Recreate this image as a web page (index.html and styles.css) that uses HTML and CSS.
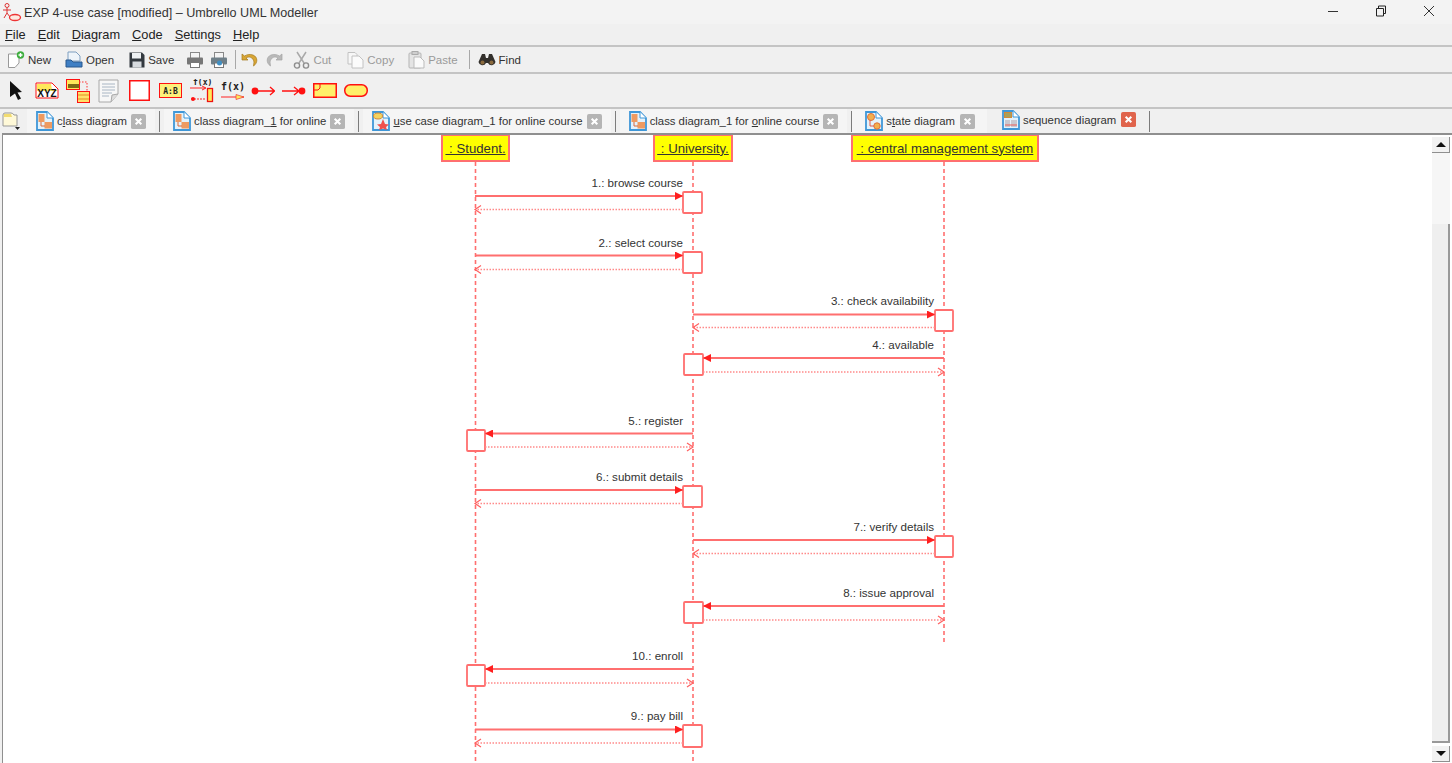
FILE: index.html
```html
<!DOCTYPE html>
<html lang="en">

<head>
    <meta charset="UTF-8">
    <title>EXP 4-use case [modified] – Umbrello UML Modeller</title>
    <link rel="stylesheet" href="styles.css">
</head>

<body>
    <svg class="defs" width="0" height="0">
        <defs>
            <marker id="head" markerWidth="9" markerHeight="8" refX="8" refY="4" orient="auto" markerUnits="userSpaceOnUse">
                <path d="M0 0 L8 4 L0 8 Z" fill="#ff1f1f" />
            </marker>
            <marker id="open" markerWidth="9" markerHeight="10" refX="7" refY="5" orient="auto" markerUnits="userSpaceOnUse">
                <path d="M1 1 L7 5 L1 9" fill="none" stroke="#ff6060" stroke-width="1.2" />
            </marker>
            <symbol id="doc-class" viewBox="0 0 18 20">
                <path d="M1 1 H11 L17 7 V19 H1 Z" fill="#e4f2fb" stroke="#3f97d8" stroke-width="1.8" />
                <path d="M11 1 V7 H17" fill="#fff" stroke="#3f97d8" />
                <rect x="2.500" y="3" width="6" height="8" fill="#ee9a60" />
                <rect x="8.500" y="11" width="7.500" height="6.500" fill="#ee9a60" />
                <path d="M5 11 V15 H9" fill="none" stroke="#d9683a" />
            </symbol>
            <symbol id="doc-usecase" viewBox="0 0 18 20">
                <path d="M1 1 H11 L17 7 V19 H1 Z" fill="#e4f2fb" stroke="#3f97d8" stroke-width="1.8" />
                <path d="M11 1 V7 H17" fill="#fff" stroke="#3f97d8" />
                <ellipse cx="6" cy="5" rx="4.500" ry="3" fill="#f4d35e" stroke="#d08a3a" />
                <path d="M11 8 L13 13 L17 13.500 L14 16 L15 19 L11 17.500 L7 19 L8 16 L5 13.500 L9 13 Z" fill="#f0504e" />
            </symbol>
            <symbol id="doc-state" viewBox="0 0 18 20">
                <path d="M1 1 H11 L17 7 V19 H1 Z" fill="#e4f2fb" stroke="#3f97d8" stroke-width="1.8" />
                <path d="M11 1 V7 H17" fill="#fff" stroke="#3f97d8" />
                <circle cx="6" cy="6" r="3.500" fill="#f2b04e" stroke="#e0703a" />
                <circle cx="12" cy="15" r="3.200" fill="#f2b04e" stroke="#e0703a" />
                <path d="M5 9 V15 H9" fill="none" stroke="#e05a4a" />
            </symbol>
            <symbol id="doc-seq" viewBox="0 0 18 20">
                <path d="M1 1 H11 L17 7 V19 H1 Z" fill="#e4f2fb" stroke="#3f97d8" stroke-width="1.8" />
                <path d="M11 1 V7 H17" fill="#fff" stroke="#3f97d8" />
                <rect x="2.500" y="2.500" width="7" height="5" fill="#a8a05a" stroke="#d08a3a" />
                <rect x="3" y="10" width="5" height="7" fill="#c8c8d0" />
                <rect x="9" y="10" width="6" height="7" fill="#c8c8d0" />
                <path d="M3 15 H15" stroke="#e8605a" />
            </symbol>
            <symbol id="x" viewBox="0 0 16 16">
                <rect width="16" height="16" rx="2" fill="#b5b5b5" />
                <path d="M5 5 L11 11 M11 5 L5 11" stroke="#fff" stroke-width="2.2" />
            </symbol>
        </defs>
    </svg>

    <header class="titlebar">
        <svg class="app-icon" width="20" height="20" viewBox="0 0 20 20">
            <circle cx="5" cy="3.500" r="2" fill="none" stroke="#d33" />
            <path d="M5 6 V11 M1 8 H9 M5 11 L2 16 M5 11 L8 15" stroke="#d33" fill="none" />
            <ellipse cx="13" cy="15.500" rx="5.500" ry="3" fill="#fde9e0" stroke="#e33" stroke-width="1.3" />
        </svg>
        <span class="title">EXP 4-use case [modified] – Umbrello UML Modeller</span>
        <div class="win-controls">
            <svg width="12" height="12" viewBox="0 0 12 12"><path d="M1 6.500 H11" stroke="#333" /></svg>
            <svg width="12" height="12" viewBox="0 0 12 12"><path d="M1.500 3.500 H8.500 V11 H1.500 Z M3.500 3 V1 H10.500 V8.500 H9" fill="none" stroke="#222" /></svg>
            <svg width="12" height="12" viewBox="0 0 12 12"><path d="M1 1 L11 11 M11 1 L1 11" stroke="#333" /></svg>
        </div>
    </header>

    <nav class="menubar">
        <span><u>F</u>ile</span>
        <span><u>E</u>dit</span>
        <span><u>D</u>iagram</span>
        <span><u>C</u>ode</span>
        <span><u>S</u>ettings</span>
        <span><u>H</u>elp</span>
    </nav>

    <div class="toolbar main-tools">
        <button class="tool tool-new">
            <svg width="18" height="18" viewBox="0 0 18 18">
                <path d="M1.500 3 H12 V12 L8 16.500 H1.500 Z" fill="#fff" stroke="#999" />
                <circle cx="13.500" cy="4" r="3.700" fill="#3fae3f" />
                <path d="M11.500 4 H15.500 M13.500 2 V6" stroke="#fff" stroke-width="1.400" />
            </svg>New
        </button>
        <button class="tool tool-open">
            <svg width="18" height="18" viewBox="0 0 18 18">
                <path d="M3 1 H11 L15 5 V10 H3 Z" fill="#eef4fa" stroke="#7f9fc0" />
                <path d="M1 9 H6 L8 11 H17 V16 H1 Z" fill="#3f7fc4" stroke="#28598e" />
            </svg>Open
        </button>
        <button class="tool tool-save">
            <svg width="16" height="16" viewBox="0 0 16 16">
                <path d="M0.500 0.500 H13 L15.500 3 V15.500 H0.500 Z" fill="#33393f" />
                <rect x="3" y="1" width="9" height="5.500" fill="#eef1f3" />
                <rect x="3.500" y="9.500" width="9" height="6" fill="#d6dade" />
            </svg>Save
        </button>
        <button class="tool tool-icon tool-print">
            <svg width="18" height="18" viewBox="0 0 18 18">
                <rect x="4.500" y="1.500" width="9" height="6" fill="#f4f4f4" stroke="#888" />
                <rect x="1" y="6.500" width="16" height="7" rx="1" fill="#777" />
                <rect x="4.500" y="11.500" width="9" height="5" fill="#fff" stroke="#777" />
            </svg>
        </button>
        <button class="tool tool-icon tool-preview">
            <svg width="18" height="18" viewBox="0 0 18 18">
                <rect x="4.500" y="1.500" width="9" height="6" fill="#f4f4f4" stroke="#888" />
                <rect x="1" y="6.500" width="16" height="7" rx="1" fill="#6f7f88" />
                <rect x="4.500" y="12" width="9" height="4.500" fill="#fff" stroke="#777" />
                <circle cx="9.500" cy="12" r="2.500" fill="#3f8fc4" />
            </svg>
        </button>
        <i class="sep"></i>
        <button class="tool tool-icon tool-undo">
            <svg width="18" height="16" viewBox="0 0 18 16">
                <path d="M1 2 V8 H7 L5 6 C8 4 12 5 13 10 L12.500 14 C17 11 17 5 12 3 C9 2 6 2.500 3.500 4 Z" fill="#d8a635" stroke="#a57a1c" stroke-width=".7" />
            </svg>
        </button>
        <button class="tool tool-icon tool-redo">
            <svg width="18" height="16" viewBox="0 0 18 16">
                <path d="M17 2 V8 H11 L13 6 C10 4 6 5 5 10 L5.500 14 C1 11 1 5 6 3 C9 2 12 2.500 14.500 4 Z" fill="#b9b9b9" stroke="#a5a5a5" stroke-width=".7" />
            </svg>
        </button>
        <button class="tool tool-off tool-cut">
            <svg width="17" height="18" viewBox="0 0 17 18">
                <path d="M4 1 L11 12 M13 1 L6 12" stroke="#a9a9a9" stroke-width="1.500" />
                <circle cx="4" cy="14.500" r="2.600" fill="none" stroke="#8d8d8d" stroke-width="1.400" />
                <circle cx="13" cy="14.500" r="2.600" fill="none" stroke="#8d8d8d" stroke-width="1.400" />
            </svg>Cut
        </button>
        <button class="tool tool-off tool-copy">
            <svg width="17" height="18" viewBox="0 0 17 18">
                <path d="M1 1.500 H8 L10 3.500 V13 H1 Z" fill="#f7f7f7" stroke="#c2c2c2" />
                <path d="M5 5 H12 L16 9 V17 H5 Z" fill="#fbfbfb" stroke="#c2c2c2" />
            </svg>Copy
        </button>
        <button class="tool tool-off tool-paste">
            <svg width="17" height="18" viewBox="0 0 17 18">
                <rect x="1" y="2" width="12" height="15" rx="1" fill="#e4e4e4" stroke="#b5b5b5" />
                <rect x="4" y="0.500" width="6" height="3" fill="#cfcfcf" stroke="#aaa" />
                <path d="M6 6 H12 L16 10 V17 H6 Z" fill="#fafafa" stroke="#bbb" />
            </svg>Paste
        </button>
        <i class="sep sep-find"></i>
        <button class="tool tool-find">
            <svg width="18" height="14" viewBox="0 0 18 14">
                <path d="M4 1 H7 L8 5 H10 L11 1 H14 L17.500 9 A4 4 0 0 1 10 10 H8 A4 4 0 0 1 .5 9 Z" fill="#33302c" />
                <circle cx="4.500" cy="9.500" r="2" fill="#8a6a3d" />
                <circle cx="13.500" cy="9.500" r="2" fill="#8a6a3d" />
            </svg>Find
        </button>
    </div>

    <div class="toolbar uml-tools">
        <svg class="u-arrow" width="14" height="19" viewBox="0 0 14 19"><path d="M1 0 L13 11 L8.500 11.500 L12 17.500 L9 19 L6 12.500 L1 16 Z" fill="#111" /></svg>
        <svg class="u-class" width="24" height="17" viewBox="0 0 24 17">
            <path d="M1 1 H17 L23 7 V16 H1 Z" fill="#fff" stroke="#f11" />
            <path d="M2 2 H16 L17 8 H22 V9 H2 Z" fill="#ffe95a" />
            <text x="12" y="15" class="u-xyz">XYZ</text>
        </svg>
        <svg class="u-assoc" width="24" height="24" viewBox="0 0 24 24">
            <rect x="0.500" y="0.500" width="13" height="10" fill="#ffe95a" stroke="#f11" />
            <rect x="2" y="5" width="11" height="4" fill="#7c6a16" />
            <path d="M13 3 H21 V12" fill="none" stroke="#f33" stroke-dasharray="1.500 1.500" />
            <rect x="11.500" y="12.500" width="12" height="11" fill="#ffe06a" stroke="#f11" />
            <path d="M12 16 H23 M12 20 H23" stroke="#e58b20" />
        </svg>
        <svg class="u-note" width="21" height="24" viewBox="0 0 21 24">
            <path d="M1 1 H20 V15 L13 23 H1 Z" fill="#f7f7f7" stroke="#a8a8a8" />
            <path d="M13 23 L14 16 L20 15" fill="#ddd" stroke="#a8a8a8" />
            <path d="M4 5 H17 M4 8 H17 M4 11 H17 M4 14 H14 M4 17 H11" stroke="#a9b6c4" />
        </svg>
        <svg class="u-box" width="21" height="21" viewBox="0 0 21 21"><rect x=".75" y=".75" width="19.500" height="19.500" fill="#fff" stroke="#f11" stroke-width="1.500" /></svg>
        <svg class="u-ab" width="23" height="15" viewBox="0 0 23 15">
            <rect x=".5" y=".5" width="22" height="14" fill="#fdf07a" stroke="#f11" />
            <text x="11.500" y="10.500" class="u-abt">A:B</text>
        </svg>
        <svg class="u-msg" width="24" height="24" viewBox="0 0 24 24">
            <text x="3" y="6" class="u-fx u-fx-sm">f(x)</text>
            <path d="M0 9 H15 M12 7 L16 9 L12 11" fill="none" stroke="#f22" />
            <rect x="17.500" y="9.500" width="5" height="13" fill="#ffe95a" stroke="#e11" stroke-width="1.300" />
            <path d="M1 20 H15" stroke="#f22" stroke-dasharray="2 1" />
            <circle cx="3" cy="20" r="2" fill="#f11" />
        </svg>
        <svg class="u-msg2" width="24" height="24" viewBox="0 0 24 24">
            <text x="0" y="11" class="u-fx">f(x)</text>
            <path d="M0 18 H23" stroke="#f22" />
            <path d="M15 15.500 L23 18 L15 20.500 Z" fill="#ffe95a" stroke="#e33" stroke-width=".7" />
        </svg>
        <svg class="u-found" width="24" height="10" viewBox="0 0 24 10">
            <circle cx="4" cy="5" r="3.400" fill="#f11" />
            <path d="M5 5 H23 M19 1 L23.500 5 L19 9" fill="none" stroke="#f11" stroke-width="1.300" />
        </svg>
        <svg class="u-lost" width="24" height="10" viewBox="0 0 24 10">
            <circle cx="20" cy="5" r="3.400" fill="#f11" />
            <path d="M0 5 H18 M12 1 L17 5 L12 9" fill="none" stroke="#f11" stroke-width="1.300" />
        </svg>
        <svg class="u-yellow" width="24" height="15" viewBox="0 0 24 15">
            <path d="M.75 .75 H23.250 V14.250 H.75 Z" fill="#fff06a" stroke="#f11" stroke-width="1.500" />
            <path d="M1 7 H5 L7 5 V1" fill="none" stroke="#f11" />
        </svg>
        <svg class="u-state" width="24" height="13" viewBox="0 0 24 13"><rect x=".75" y=".75" width="22.500" height="11.500" rx="5.500" fill="#fff06a" stroke="#f11" stroke-width="1.500" /></svg>
    </div>

    <div class="tabbar">
        <svg class="new-tab" width="18" height="18" viewBox="0 0 18 18">
            <path d="M1 3 Q1 1 3 1 H9 Q11 1 12 3 H15 V14 H1 Z" fill="#fff9d8" stroke="#999" />
            <path d="M2 2 H9 L10 5 H2 Z" fill="#f2dc70" />
            <path d="M13 15 L18 15 L15.500 18 Z" fill="#222" />
        </svg>
        <div class="tab tab-1"><svg width="18" height="20"><use href="#doc-class" /></svg><span>c<u>l</u>ass diagram</span><svg width="15" height="15"><use href="#x" /></svg></div>
        <i class="tab-sep"></i>
        <div class="tab tab-2"><svg width="18" height="20"><use href="#doc-class" /></svg><span>class diagram_<u>1</u> for online</span><svg width="15" height="15"><use href="#x" /></svg></div>
        <i class="tab-sep"></i>
        <div class="tab tab-3"><svg width="18" height="20"><use href="#doc-usecase" /></svg><span><u>u</u>se case diagram_1 for online course</span><svg width="15" height="15"><use href="#x" /></svg></div>
        <i class="tab-sep"></i>
        <div class="tab tab-4"><svg width="18" height="20"><use href="#doc-class" /></svg><span>class diagram_1 for <u>o</u>nline course</span><svg width="15" height="15"><use href="#x" /></svg></div>
        <i class="tab-sep"></i>
        <div class="tab tab-5"><svg width="18" height="20"><use href="#doc-state" /></svg><span>s<u>t</u>ate diagram</span><svg width="15" height="15"><use href="#x" /></svg></div>
        <div class="tab tab-active"><svg width="18" height="20"><use href="#doc-seq" /></svg><span>sequence diagram</span>
            <svg width="15" height="15" viewBox="0 0 16 16"><rect width="16" height="16" rx="2" fill="#e0644c" /><path d="M5 5 L11 11 M11 5 L5 11" stroke="#fff" stroke-width="2.200" /></svg>
        </div>
        <i class="tab-sep"></i>
    </div>

    <main class="workspace">
        <section class="canvas">
            <svg class="diagram" width="1430" height="628" viewBox="3 135 1430 628">
                <!-- lifelines -->
                <g class="life">
                    <path d="M475.500 162 V763" />
                    <path d="M693 162 V763" />
                    <path d="M944 162 V644" />
                </g>

                <!-- activations -->
                <g class="act">
                    <rect x="683" y="192" width="19" height="21" rx="1" />
                    <rect x="683" y="252" width="19" height="21" rx="1" />
                    <rect x="935" y="310" width="18" height="21" rx="1" />
                    <rect x="684" y="354" width="19" height="21" rx="1" />
                    <rect x="467" y="430" width="18" height="21" rx="1" />
                    <rect x="683" y="486" width="19" height="21" rx="1" />
                    <rect x="935" y="536" width="18" height="21" rx="1" />
                    <rect x="684" y="602" width="19" height="21" rx="1" />
                    <rect x="467" y="665" width="18" height="21" rx="1" />
                    <rect x="683" y="725" width="19" height="22" rx="1" />
                </g>

                <!-- calls -->
                <g class="call">
                    <path d="M475 196 H683" />
                    <path d="M475 255.500 H683" />
                    <path d="M693 314.500 H935" />
                    <path d="M944 358 H703" />
                    <path d="M693 433.500 H485" />
                    <path d="M475 490 H683" />
                    <path d="M693 540 H935" />
                    <path d="M944 606 H703" />
                    <path d="M693 669 H485" />
                    <path d="M475 729.500 H683" />
                </g>

                <!-- returns -->
                <g class="ret">
                    <path d="M683 209.500 H475" />
                    <path d="M683 269.500 H475" />
                    <path d="M935 327.500 H693" />
                    <path d="M703 372 H944" />
                    <path d="M485 447 H693" />
                    <path d="M683 503.500 H475" />
                    <path d="M935 553.500 H693" />
                    <path d="M703 620 H944" />
                    <path d="M485 683 H693" />
                    <path d="M683 743 H475" />
                </g>

                <g class="msg">
                    <text x="683" y="187">1.: browse course</text>
                    <text x="683" y="247">2.: select course</text>
                    <text x="934" y="305">3.: check availability</text>
                    <text x="934" y="349">4.: available</text>
                    <text x="683" y="425">5.: register</text>
                    <text x="683" y="481">6.: submit details</text>
                    <text x="934" y="531">7.: verify details</text>
                    <text x="934" y="597">8.: issue approval</text>
                    <text x="683" y="660">10.: enroll</text>
                    <text x="683" y="720">9.: pay bill</text>
                </g>
            </svg>

            <div class="obj obj-student"><u>&nbsp;: Student.</u></div>
            <div class="obj obj-university"><u>&nbsp;: University.</u></div>
            <div class="obj obj-central"><u>&nbsp;: central management system</u></div>
        </section>

        <aside class="scrollbar">
            <div class="sb-btn"><i class="tri-up"></i></div>
            <div class="sb-track"></div>
            <div class="sb-thumb"></div>
            <div class="sb-btn"><i class="tri-down"></i></div>
        </aside>
    </main>
</body>

</html>
```

FILE: styles.css
```css
* {
    box-sizing: border-box;
}

html,
body {
    height: 100%;
}

body {
    margin: 0;
    overflow: hidden;
    background-color: #f0f0f0;
    color: #222;
    font-family: "Liberation Sans", "Noto Sans", sans-serif;
    font-size: 12px;
    display: flex;
    flex-direction: column;
}

.defs {
    position: absolute;
}

.titlebar {
    height: 24px;
    display: flex;
    align-items: center;
    padding-left: 2px;
    background-color: #f3f3f3;
    flex: none;
}

.app-icon {
    margin-right: 2px;
}

.title {
    font-size: 12.600px;
    color: #333;
    margin-top: 1px;
}

.win-controls {
    margin-left: auto;
    padding-right: 17px;
    display: flex;
    gap: 36px;
    margin-top: -2px;
}

.menubar {
    height: 21px;
    display: flex;
    align-items: center;
    gap: 12px;
    padding-left: 5px;
    font-size: 12.800px;
    flex: none;
}

.toolbar {
    display: flex;
    align-items: center;
    border-top: 2px solid #c4c4c4;
    flex: none;
}

.main-tools {
    height: 27px;
    padding-left: 7px;
}

.tool {
    display: flex;
    align-items: center;
    gap: 3px;
    padding: 0;
    border: none;
    background: none;
    font: inherit;
    font-size: 11.500px;
    color: #333;
}

.tool-off {
    color: #9a9a9a;
}

.tool-open { margin-left: 14px; }
.tool-save { margin-left: 15px; }
.tool-print { margin-left: 12px; }
.tool-preview { margin-left: 6px; }
.tool-undo { margin-left: 5px; }
.tool-redo { margin-left: 6px; }
.tool-cut { margin-left: 10px; }
.tool-copy { margin-left: 16px; }
.tool-paste { margin-left: 14px; }
.tool-find { margin-left: 8px; }

.sep {
    width: 1px;
    height: 19px;
    margin-left: 7px;
    background-color: #a8a8a8;
}

.sep-find {
    margin-left: 11px;
}

.uml-tools {
    height: 35px;
    padding-left: 9px;
}

.uml-tools svg {
    flex: none;
}

.u-class { margin-left: 12px; }
.u-assoc { margin-left: 7px; }
.u-note { margin-left: 8px; }
.u-box { margin-left: 10px; }
.u-ab { margin-left: 9px; }
.u-msg { margin-left: 8px; }
.u-msg2 { margin-left: 7px; }
.u-found { margin-left: 6px; }
.u-lost { margin-left: 7px; }
.u-yellow { margin-left: 7px; }
.u-state { margin-left: 7px; }

.u-xyz {
    font: bold 10px "Liberation Sans", sans-serif;
    text-anchor: middle;
    fill: #111;
}

.u-abt {
    font: bold 8px "DejaVu Sans Mono", monospace;
    text-anchor: middle;
    fill: #222;
}

.u-fx {
    font: bold 10px "DejaVu Sans Mono", monospace;
    fill: #222;
}

.u-fx-sm {
    font-size: 8px;
}

.tabbar {
    height: 26px;
    display: flex;
    align-items: center;
    padding-left: 2px;
    border-top: 2px solid #c4c4c4;
    font-size: 11.350px;
    flex: none;
}

.new-tab {
    margin-right: 16px;
    flex: none;
}

.tab {
    display: flex;
    align-items: center;
    gap: 3px;
    height: 100%;
    white-space: nowrap;
    color: #333;
}

.tab span {
    flex: none;
}

.tab svg {
    flex: none;
}

.tab svg:last-child {
    margin-left: 1px;
}

.tab-1,
.tab-2,
.tab-3,
.tab-4 {
    background-color: #f5f5f5;
    box-shadow: -9px 0 0 #f5f5f5, 9px 0 0 #f5f5f5;
}

.tab-sep {
    width: 1px;
    height: 21px;
    margin: 0 13px;
    background-color: #7c7c7c;
    flex: none;
}

.tab-5 {
    background-color: #f5f5f5;
    margin-left: -13px;
    padding: 0 12px 0 13px;
}

.tab-5 svg:last-child,
.tab-active svg:last-child {
    margin-left: 2px;
}

.tab-active {
    height: 25px;
    margin-top: -3px;
    padding-left: 15px;
    padding-right: 0;
}

.workspace {
    flex: 1;
    display: flex;
    min-height: 0;
    margin-left: 2px;
    border-top: 2px solid #8f8f8f;
    border-left: 1px solid #8f8f8f;
}

.canvas {
    position: relative;
    width: 1430px;
    background-color: #fff;
    overflow: hidden;
}

.diagram {
    display: block;
}

.life path {
    stroke: #ff6f6f;
    stroke-width: 1.600;
    stroke-dasharray: 4 3;
    fill: none;
}

.act rect {
    fill: #fff;
    stroke: #ff6f6f;
    stroke-width: 1.800;
}

.call path {
    stroke: #ff6f6f;
    stroke-width: 1.800;
    fill: none;
    marker-end: url(#head);
}

.ret path {
    stroke: #ff8a8a;
    stroke-width: 1.400;
    stroke-dasharray: 1.500 1.500;
    fill: none;
    marker-end: url(#open);
}

.msg text {
    font-size: 11.600px;
    text-anchor: end;
    fill: #333;
}

/* object heads sit over the lifelines, at their place on the canvas */
.obj {
    position: absolute;
    top: 0;
    height: 27px;
    display: flex;
    align-items: center;
    justify-content: center;
    background-color: #ffff00;
    border: 2px solid #ff6f6f;
    border-top-width: 1px;
    font-family: "Liberation Sans", sans-serif;
    font-size: 13.200px;
    color: #333;
    white-space: nowrap;
}

.obj-student {
    left: 438px;
    width: 69px;
}

.obj-university {
    left: 650px;
    width: 80px;
}

.obj-central {
    left: 848px;
    width: 188px;
}

.scrollbar {
    width: 20px;
    display: flex;
    flex-direction: column;
    padding: 2px 2px 1px 0;
    background-color: #fff;
}

.sb-btn {
    height: 16px;
    display: flex;
    align-items: center;
    justify-content: center;
    background-color: #f2f2f2;
    border-right: 1px solid #8f8f8f;
    border-bottom: 1px solid #8f8f8f;
    flex: none;
}

.sb-track {
    height: 71px;
    background-color: #f6f6f6;
    flex: none;
}

.sb-thumb {
    flex: 1;
    margin-bottom: 3px;
    background-color: #efefef;
    border-right: 2px solid #999;
    border-bottom: 2px solid #999;
}

.tri-up,
.tri-down {
    width: 0;
    height: 0;
    border-left: 5px solid transparent;
    border-right: 5px solid transparent;
}

.tri-up {
    border-bottom: 5px solid #111;
}

.tri-down {
    border-top: 5px solid #111;
}
```
